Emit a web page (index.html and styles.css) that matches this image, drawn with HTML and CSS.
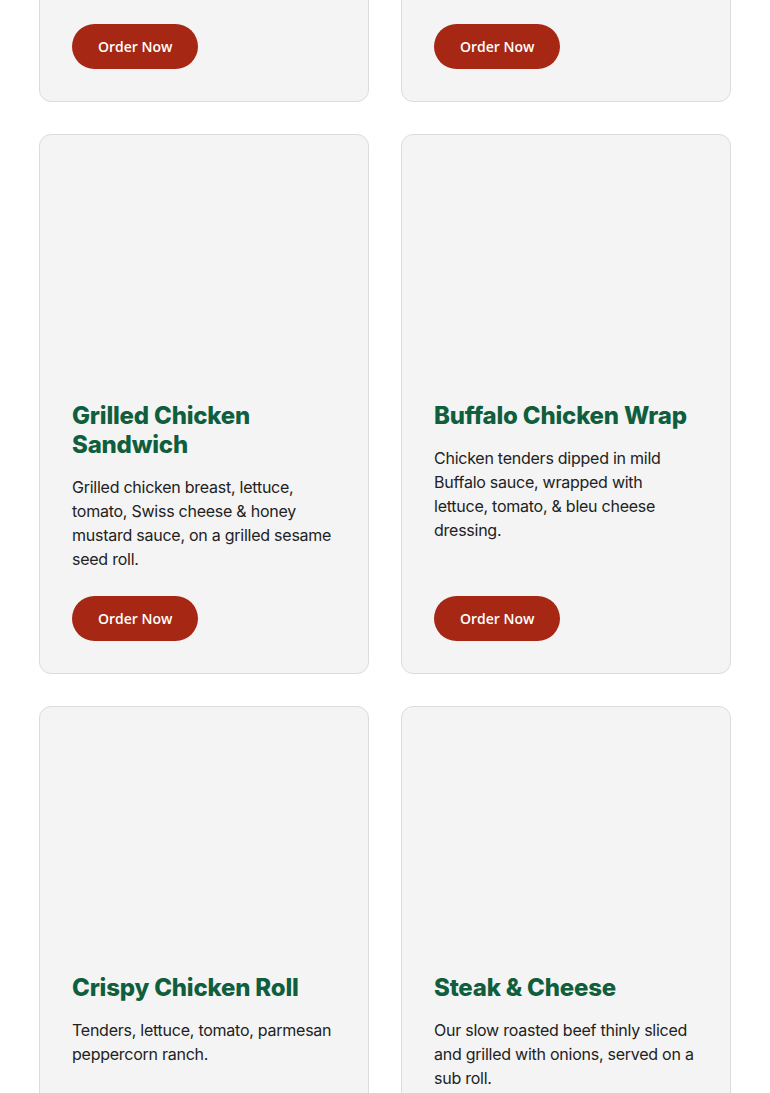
FILE: index.html
```html
<!DOCTYPE html>
<html lang="en">
<head>
  <meta charset="UTF-8" />
  <meta name="viewport" content="width=device-width, initial-scale=1.0"/>
  <title>Menu - Chicken</title>
  <link rel="stylesheet" href="styles.css">
</head>
<body>
  <main class="menu">
    <div class="menu-grid">
      <div class="card card-cut">
        <a class="order-btn" href="#">Order Now</a>
      </div>
      <div class="card card-cut">
        <a class="order-btn" href="#">Order Now</a>
      </div>

      <div class="card">
        <div class="card-img"></div>
        <h3 class="card-title">Grilled Chicken Sandwich</h3>
        <p class="card-desc">Grilled chicken breast, lettuce, tomato, Swiss cheese &amp; honey mustard sauce, on a grilled sesame seed roll.</p>
        <a class="order-btn" href="#">Order Now</a>
      </div>
      <div class="card">
        <div class="card-img"></div>
        <h3 class="card-title">Buffalo Chicken Wrap</h3>
        <p class="card-desc">Chicken tenders dipped in mild Buffalo sauce, wrapped with lettuce, tomato, &amp; bleu cheese dressing.</p>
        <a class="order-btn" href="#">Order Now</a>
      </div>

      <div class="card card-tall">
        <div class="card-img"></div>
        <h3 class="card-title">Crispy Chicken Roll</h3>
        <p class="card-desc">Tenders, lettuce, tomato, parmesan peppercorn ranch.</p>
        <a class="order-btn" href="#">Order Now</a>
      </div>
      <div class="card card-tall">
        <div class="card-img"></div>
        <h3 class="card-title">Steak &amp; Cheese</h3>
        <p class="card-desc">Our slow roasted beef thinly sliced and grilled with onions, served on a sub roll.</p>
        <a class="order-btn" href="#">Order Now</a>
      </div>
    </div>
  </main>
</body>
</html>
```

FILE: styles.css
```css
body {
  margin: 0;
  font-family: 'Inter', 'Noto Sans', sans-serif;
  background-color: #fff;
  color: #222;
  overflow: hidden;
}
.menu {
  padding: 0 39px;
}
.menu-grid {
  display: grid;
  grid-template-columns: 1fr 1fr;
  gap: 32px;
  margin-top: -9px;
}
.card {
  display: flex;
  flex-direction: column;
  align-items: flex-start;
  background-color: #f4f4f4;
  border: 1px solid #dcdcdc;
  border-radius: 12px;
  padding: 32px;
}
.card-cut {
  border-top-left-radius: 0;
  border-top-right-radius: 0;
}
.card-tall {
  min-height: 540px;
}
.card-img {
  height: 234px;
}
.card-title {
  margin: 0 0 16px;
  font-size: 24px;
  line-height: 29px;
  font-weight: 800;
  color: #0f5e3d;
  letter-spacing: -0.2px;
}
.card-desc {
  margin: 0 0 25px;
  font-size: 16px;
  line-height: 24px;
  letter-spacing: -0.25px;
}
.order-btn {
  margin-top: auto;
  display: inline-block;
  padding: 0 26px;
  height: 45px;
  line-height: 45px;
  border-radius: 23px;
  background-color: #a52714;
  color: #fff;
  font-family: 'Open Sans', sans-serif;
  font-weight: 600;
  font-size: 14px;
  text-decoration: none;
}
```
